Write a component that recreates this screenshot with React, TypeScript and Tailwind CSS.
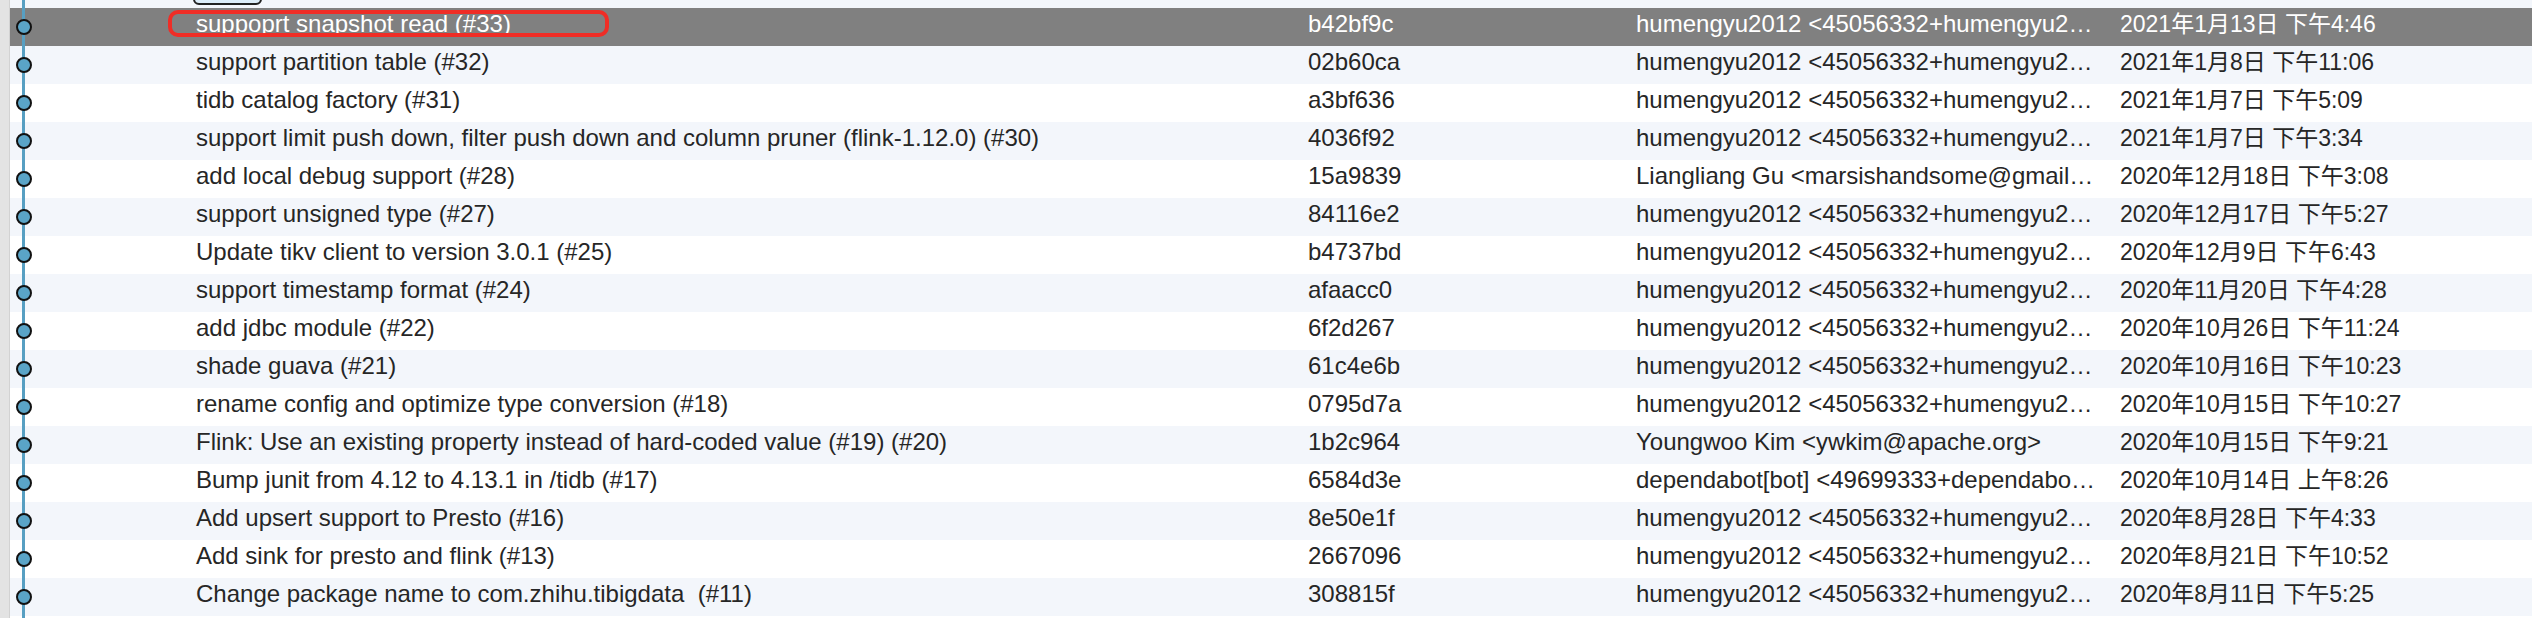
type Commit = {
    message: string;
    hash: string;
    author: string;
    date: string;
};

const commits: Commit[] = [
    { message: "suppoprt snapshot read (#33)", hash: "b42bf9c", author: "humengyu2012 <45056332+humengyu2012@users.noreply.github.com>", date: "2021年1月13日 下午4:46" },
    { message: "support partition table (#32)", hash: "02b60ca", author: "humengyu2012 <45056332+humengyu2012@users.noreply.github.com>", date: "2021年1月8日 下午11:06" },
    { message: "tidb catalog factory (#31)", hash: "a3bf636", author: "humengyu2012 <45056332+humengyu2012@users.noreply.github.com>", date: "2021年1月7日 下午5:09" },
    { message: "support limit push down, filter push down and column pruner (flink-1.12.0) (#30)", hash: "4036f92", author: "humengyu2012 <45056332+humengyu2012@users.noreply.github.com>", date: "2021年1月7日 下午3:34" },
    { message: "add local debug support (#28)", hash: "15a9839", author: "Liangliang Gu <marsishandsome@gmail.com>", date: "2020年12月18日 下午3:08" },
    { message: "support unsigned type (#27)", hash: "84116e2", author: "humengyu2012 <45056332+humengyu2012@users.noreply.github.com>", date: "2020年12月17日 下午5:27" },
    { message: "Update tikv client to version 3.0.1 (#25)", hash: "b4737bd", author: "humengyu2012 <45056332+humengyu2012@users.noreply.github.com>", date: "2020年12月9日 下午6:43" },
    { message: "support timestamp format (#24)", hash: "afaacc0", author: "humengyu2012 <45056332+humengyu2012@users.noreply.github.com>", date: "2020年11月20日 下午4:28" },
    { message: "add jdbc module (#22)", hash: "6f2d267", author: "humengyu2012 <45056332+humengyu2012@users.noreply.github.com>", date: "2020年10月26日 下午11:24" },
    { message: "shade guava (#21)", hash: "61c4e6b", author: "humengyu2012 <45056332+humengyu2012@users.noreply.github.com>", date: "2020年10月16日 下午10:23" },
    { message: "rename config and optimize type conversion (#18)", hash: "0795d7a", author: "humengyu2012 <45056332+humengyu2012@users.noreply.github.com>", date: "2020年10月15日 下午10:27" },
    { message: "Flink: Use an existing property instead of hard-coded value (#19) (#20)", hash: "1b2c964", author: "Youngwoo Kim <ywkim@apache.org>", date: "2020年10月15日 下午9:21" },
    { message: "Bump junit from 4.12 to 4.13.1 in /tidb (#17)", hash: "6584d3e", author: "dependabot[bot] <49699333+dependabot[bot]@users.noreply.github.com>", date: "2020年10月14日 上午8:26" },
    { message: "Add upsert support to Presto (#16)", hash: "8e50e1f", author: "humengyu2012 <45056332+humengyu2012@users.noreply.github.com>", date: "2020年8月28日 下午4:33" },
    { message: "Add sink for presto and flink (#13)", hash: "2667096", author: "humengyu2012 <45056332+humengyu2012@users.noreply.github.com>", date: "2020年8月21日 下午10:52" },
    { message: "Change package name to com.zhihu.tibigdata  (#11)", hash: "308815f", author: "humengyu2012 <45056332+humengyu2012@users.noreply.github.com>", date: "2020年8月11日 下午5:25" },
];

function GraphCell({ dot = true }: { dot?: boolean }) {
    return (
        <div className="relative w-[186px] h-full shrink-0">
            <div className="absolute left-[12px] top-0 bottom-0 w-[3px] bg-[#579fc2]" />
            {dot && (
                <div className="absolute left-[6px] top-1/2 -translate-y-1/2 w-[16px] h-[16px] rounded-full bg-[#5aa4c7] border-2 border-[#111]" />
            )}
        </div>
    );
}

function CommitRow({ commit, index }: { commit: Commit; index: number }) {
    const selected = index === 0;
    const rowBg = selected ? "bg-[#808080] text-white" : index % 2 === 1 ? "bg-[#f3f6fb] text-[#262626]" : "bg-white text-[#262626]";

    return (
        <div className={`flex items-center h-[38px] shrink-0 ${rowBg}`}>
            <GraphCell />
            <div className="relative w-[1112px] shrink-0 pb-[6px] whitespace-pre">
                {commit.message}
                {selected && (
                    <div className="absolute -left-[28px] -top-[2px] w-[441px] h-[27px] rounded-[10px] border-[4px] border-[#ef2d26]" />
                )}
            </div>
            <div className="w-[328px] shrink-0 pb-[6px]">{commit.hash}</div>
            <div className="w-[462px] shrink-0 pb-[6px] overflow-hidden text-ellipsis whitespace-nowrap">{commit.author}</div>
            <div className="pl-[22px] pb-[6px] whitespace-nowrap text-[23px]">{commit.date}</div>
        </div>
    );
}

export default function App() {
    return (
        <div className="w-[2532px] h-[618px] overflow-hidden flex bg-white text-[24px] leading-none font-['Liberation_Sans','Noto_Sans_CJK_SC',sans-serif]">
            <div className="w-[10px] shrink-0 bg-[#e3e3e3] border-r border-[#d2d2d2]" />
            <div className="relative flex-1 flex flex-col">
                <div className="flex h-[8px] shrink-0 bg-[#f3f6fb]">
                    <GraphCell dot={false} />
                </div>
                {commits.map((commit, index) => (
                    <CommitRow key={commit.hash} commit={commit} index={index} />
                ))}
                <div className="flex h-[20px] shrink-0 bg-white">
                    <GraphCell dot={false} />
                </div>

                {/* tooltip edge peeking in from above */}
                <div className="absolute left-[183px] -top-[20px] w-[69px] h-[25px] rounded-[6px] border-2 border-[#222] bg-[#dcedf9]" />
            </div>
        </div>
    );
}
